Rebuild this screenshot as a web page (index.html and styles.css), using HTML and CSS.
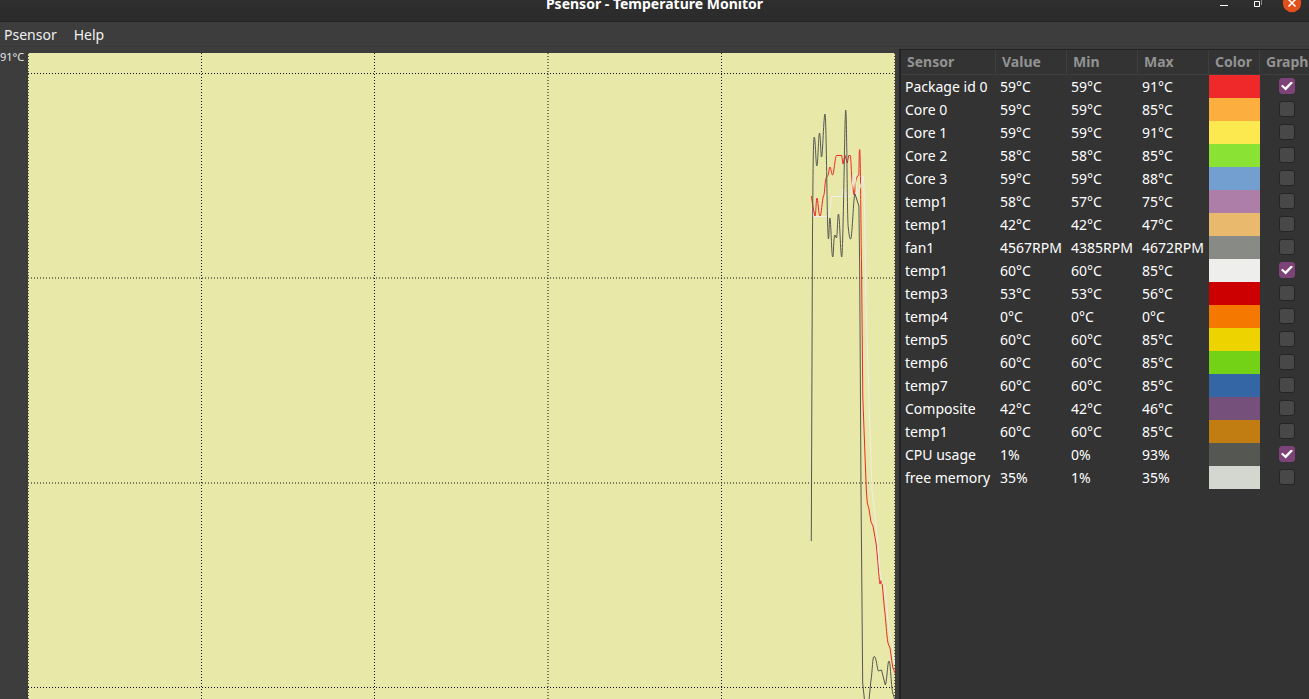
FILE: index.html
```html
<!DOCTYPE html>
<html lang="en">
<head>
<meta charset="utf-8">
<title>Psensor - Temperature Monitor</title>
<link rel="stylesheet" href="styles.css">
</head>
<body>
<header class="titlebar">
  <h1 class="title">Psensor - Temperature Monitor</h1>
  <div class="window-buttons">
    <button type="button" class="window-button" aria-label="Minimize"><svg width="20" height="22" viewBox="0 0 20 22"><path d="M6 5.500h8" stroke="#fff"/></svg></button>
    <button type="button" class="window-button" aria-label="Restore"><svg width="20" height="22" viewBox="0 0 20 22"><path d="M6.500 1.500h5v5h-5z" fill="none" stroke="#fff"/><path d="M13.500 0v5" stroke="#8a8a8a"/></svg></button>
    <button type="button" class="window-button" aria-label="Close"><svg width="20" height="22" viewBox="0 0 20 22"><circle cx="10" cy="3" r="9.200" fill="#e2501c"/><path d="M6.500-.5l7 7m0-7l-7 7" stroke="#fff" stroke-width="1.500"/></svg></button>
  </div>
</header>
<nav class="menubar">
  <button type="button" class="menu">Psensor</button>
  <button type="button" class="menu">Help</button>
</nav>
<main class="content">
  <section class="graph" aria-label="Temperature graph">
    <span class="graph-max">91°C</span>
    <svg class="plot" viewBox="28 53 867 646" preserveAspectRatio="none">
      <rect x="28" y="53" width="867" height="646" fill="#e8e8a8"/>
      <g class="grid">
        <path d="M28 73.500H895M28 278H895M28 483H895M28 687.500H895"/>
        <path d="M201.500 53V699M374.500 53V699M548 53V699M721.500 53V699"/>
        <path class="grid-edge" d="M28.500 53V699M894.500 53V699"/>
      </g>
      <g class="series">
        <path stroke="#ef2929" d="M811.500 196C812 201 813 208 815 216C816 216 816 198 817 198C818 198 818.500 216 820 216C821.500 216 822 200 823.500 196C824.500 196 825 181 826 178L828 175.500C829 173 829 167 830 167C831 167 831.300 175 832.500 175C834 175 835 156 836.500 155.500H841.700L843 164L845 155.500L847.300 163L848.700 155.500H850.300C851 156 851.500 179 852.300 184L854 195C855 195 855 180 857 177L858.700 175C859.200 172 859 149 859.700 149.500C860.500 150 861 245 861.500 260L862.800 397L866.300 490L867.300 503L869 509L871 522L873 526L876 543C878 559 878.500 576 880 584L881.300 580L882.300 585L884.300 607C886 621 886.500 635 888 643L890 648L892.700 667L895 673"/>
        <path stroke="#eeeeec" d="M811.500 208L813 216.500H829C830 212 831 196.500 832 196.500H842L843.500 187L845 196.500H850.500L853.500 176L855 174L857 196L860 188L863 176C864.500 182 865 240 865.500 270L865.700 293L868.300 377L872 490L876.300 527L880 573L882.500 583L885 587C886.500 600 887.500 620 889.300 630L892.700 647L894.500 664"/>
        <path stroke="#555753" d="M811.300 541L812.500 230C813 190 813 137 814.300 137C815.500 138 815.800 166 816.800 166C818 166 818.500 133 819.500 133C820.500 133 820.800 157 821.500 157C822.700 157 823.700 114 825 114C826.500 116 827 239 828.500 239C829 239 829.300 218 829.800 218C831 219 831.500 257 832.700 257C833.700 257 833.500 236 834.800 235L836.500 238C837.500 235 837.500 214 838.500 214C839.700 215 840.500 257 841.700 257C843.200 257 844.700 110 845.700 110C847 115 847 220 848.300 228C849.500 239 850 239 850.700 239C852.500 235 853.300 197 855 194L858.900 206L859.700 270L861 490L862.700 683L864.500 700H869L871 680C872.500 670 872.500 657 874 656.500C876.500 656 877 670 878.500 671L881.500 670L885.300 685C887 682 887.500 661 889 661C890.500 661 891 685 892.700 693L895 700"/>
      </g>
    </svg>
  </section>
  <section class="sensors" aria-label="Sensors">
    <table class="sensor-table">
      <colgroup><col class="col-name"><col class="col-num"><col class="col-num"><col class="col-num"><col class="col-color"><col></colgroup>
      <thead><tr><th>Sensor</th><th>Value</th><th>Min</th><th>Max</th><th>Color</th><th>Graph</th></tr></thead>
      <tbody>
        <tr><td>Package id 0</td><td>59°C</td><td>59°C</td><td>91°C</td><td style="background:#ef2929"></td><td class="check"><input type="checkbox" aria-label="Graph Package id 0" checked></td></tr>
        <tr><td>Core 0</td><td>59°C</td><td>59°C</td><td>85°C</td><td style="background:#fcaf3e"></td><td class="check"><input type="checkbox" aria-label="Graph Core 0"></td></tr>
        <tr><td>Core 1</td><td>59°C</td><td>59°C</td><td>91°C</td><td style="background:#fce94f"></td><td class="check"><input type="checkbox" aria-label="Graph Core 1"></td></tr>
        <tr><td>Core 2</td><td>58°C</td><td>58°C</td><td>85°C</td><td style="background:#8ae234"></td><td class="check"><input type="checkbox" aria-label="Graph Core 2"></td></tr>
        <tr><td>Core 3</td><td>59°C</td><td>59°C</td><td>88°C</td><td style="background:#729fcf"></td><td class="check"><input type="checkbox" aria-label="Graph Core 3"></td></tr>
        <tr><td>temp1</td><td>58°C</td><td>57°C</td><td>75°C</td><td style="background:#ad7fa8"></td><td class="check"><input type="checkbox" aria-label="Graph temp1"></td></tr>
        <tr><td>temp1</td><td>42°C</td><td>42°C</td><td>47°C</td><td style="background:#e9b96e"></td><td class="check"><input type="checkbox" aria-label="Graph temp1"></td></tr>
        <tr><td>fan1</td><td>4567RPM</td><td>4385RPM</td><td>4672RPM</td><td style="background:#888a85"></td><td class="check"><input type="checkbox" aria-label="Graph fan1"></td></tr>
        <tr><td>temp1</td><td>60°C</td><td>60°C</td><td>85°C</td><td style="background:#eeeeec"></td><td class="check"><input type="checkbox" aria-label="Graph temp1" checked></td></tr>
        <tr><td>temp3</td><td>53°C</td><td>53°C</td><td>56°C</td><td style="background:#cc0000"></td><td class="check"><input type="checkbox" aria-label="Graph temp3"></td></tr>
        <tr><td>temp4</td><td>0°C</td><td>0°C</td><td>0°C</td><td style="background:#f57900"></td><td class="check"><input type="checkbox" aria-label="Graph temp4"></td></tr>
        <tr><td>temp5</td><td>60°C</td><td>60°C</td><td>85°C</td><td style="background:#edd400"></td><td class="check"><input type="checkbox" aria-label="Graph temp5"></td></tr>
        <tr><td>temp6</td><td>60°C</td><td>60°C</td><td>85°C</td><td style="background:#73d216"></td><td class="check"><input type="checkbox" aria-label="Graph temp6"></td></tr>
        <tr><td>temp7</td><td>60°C</td><td>60°C</td><td>85°C</td><td style="background:#3465a4"></td><td class="check"><input type="checkbox" aria-label="Graph temp7"></td></tr>
        <tr><td>Composite</td><td>42°C</td><td>42°C</td><td>46°C</td><td style="background:#75507b"></td><td class="check"><input type="checkbox" aria-label="Graph Composite"></td></tr>
        <tr><td>temp1</td><td>60°C</td><td>60°C</td><td>85°C</td><td style="background:#c17d11"></td><td class="check"><input type="checkbox" aria-label="Graph temp1"></td></tr>
        <tr><td>CPU usage</td><td>1%</td><td>0%</td><td>93%</td><td style="background:#555753"></td><td class="check"><input type="checkbox" aria-label="Graph CPU usage" checked></td></tr>
        <tr><td>free memory</td><td>35%</td><td>1%</td><td>35%</td><td style="background:#d3d7cf"></td><td class="check"><input type="checkbox" aria-label="Graph free memory"></td></tr>
      </tbody>
    </table>
  </section>
</main>
</body>
</html>
```
FILE: styles.css
```css
* { box-sizing: border-box; }

body {
  margin: 0;
  height: 100vh;
  display: flex;
  flex-direction: column;
  overflow: hidden;
  background: #3d3d3d;
  color: #fff;
  font: 14px/22px "Noto Sans", "Open Sans", sans-serif;
}

button {
  padding: 0;
  border: 0;
  background: none;
  color: inherit;
  font: inherit;
}

.titlebar {
  flex: none;
  display: grid;
  grid-template-columns: 1fr auto 1fr;
  height: 22px;
  background: linear-gradient(#2e2e2e, #2b2b2b);
  border-bottom: 1px solid #232323;
}

.title {
  grid-column: 2;
  margin: 0;
  font-size: 14px;
  font-weight: 700;
  line-height: 8px;
}

.window-buttons {
  display: flex;
  justify-content: flex-end;
  gap: 14px;
  padding-right: 7px;
}

.window-button { display: flex; width: 20px; height: 21px; }

.menubar {
  flex: none;
  display: flex;
  gap: 17px;
  height: 25px;
  padding: 1px 0 0 4px;
  border-bottom: 1px solid #383838;
}

.menu { line-height: 24px; color: #f0f0f0; }

.content {
  flex: 1;
  min-height: 0;
  display: flex;
  gap: 4px;
  padding-top: 2px;
}

.graph {
  flex: 1;
  min-width: 0;
  display: grid;
  grid-template-columns: 28px 1fr;
  padding-top: 4px;
}

.graph-max {
  color: #e6e6e6;
  font-size: 11px;
  line-height: 8px;
}

.plot { width: 100%; height: 100%; min-height: 0; }

.grid path { fill: none; stroke: #111; stroke-dasharray: 1 2; }
.grid .grid-edge { stroke: #55553c; }
.series path { fill: none; stroke-width: 1; }

.sensors {
  flex: none;
  width: 410px;
  background: #333;
  border-top: 1px solid #232323;
  border-left: 2px solid #232323;
}

.sensor-table {
  width: 100%;
  table-layout: fixed;
  border-collapse: separate;
  border-spacing: 0;
}

.col-name { width: 95px; }
.col-num { width: 71px; }
.col-color { width: 51px; }

th {
  height: 25px;
  padding: 0 0 0 6px;
  border-right: 1px solid #3e3e3e;
  border-bottom: 1px solid #3e3e3e;
  color: #929292;
  font-weight: 700;
  line-height: 24px;
  text-align: left;
}

th:last-child { border-right: 0; }

td {
  height: 23px;
  padding: 0 0 0 4px;
  line-height: 23px;
  white-space: nowrap;
}

.check { padding: 0 0 0 19px; }

input {
  appearance: none;
  display: block;
  width: 16px;
  height: 16px;
  margin: 0 0 2px;
  border: 1px solid #252525;
  border-radius: 3px;
  background: #484848;
}

input:checked {
  border-color: #7d4378;
  background: #7d4378;
}

input:checked::before {
  content: "";
  display: block;
  width: 12px;
  height: 9px;
  margin: 3px 0 0 1px;
  background: #fff;
  clip-path: polygon(0 50%, 13% 35%, 36% 64%, 85% 0, 100% 15%, 39% 100%);
}
```
